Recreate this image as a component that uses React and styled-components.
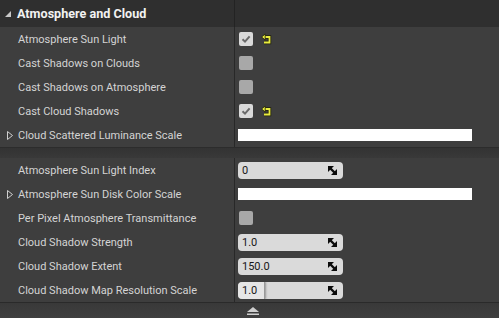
import React from "react";
import styled, { createGlobalStyle } from "styled-components";

const Global = createGlobalStyle`
  html, body { margin: 0; padding: 0; background: #3d3d3d; overflow: hidden; }
  * { box-sizing: border-box; }
`;

const Panel = styled.div`
  width: 499px;
  height: 318px;
  display: flex;
  flex-direction: column;
  background: #3d3d3d;
  font-family: Roboto, "Liberation Sans", sans-serif;
  font-size: 11px;
  color: #d6d6d6;
  overflow: hidden;
`;

const Header = styled.div`
  display: grid;
  grid-template-columns: 234px 1fr;
  height: 27px;
  background: #2f2f2f;
  flex: none;
`;

const HeaderLabel = styled.div`
  display: flex;
  align-items: center;
  padding-left: 5px;
  gap: 6px;
  font-weight: 700;
  font-size: 12.6px;
  color: #f2f2f2;
`;

const Section = styled.div`
  display: flex;
  flex-direction: column;
  flex: none;
  background: #3e3e3e;
`;

const SectionGap = styled.div`
  height: 11px;
  flex: none;
  border-top: 1px solid #2c2c2c;
  background: linear-gradient(#333333, #393939);
`;

const Row = styled.div`
  display: grid;
  grid-template-columns: 234px 1fr;
  height: 24px;
`;

const LabelCell = styled.div`
  display: flex;
  align-items: center;
  padding-left: 4px;
  white-space: nowrap;
  color: #d4d4d4;
`;

const Expander = styled.span`
  width: 14px;
  display: flex;
  align-items: center;
  padding-left: 3px;
`;

const ValueCell = styled.div`
  display: flex;
  align-items: center;
  gap: 8px;
  padding-left: 3px;
  border-left: 1px solid ${(p) => (p.$dark ? "#232323" : "#282828")};
`;

const Check = styled.div`
  width: 14px;
  height: 14px;
  margin-left: 1px;
  border-radius: 2px;
  background: ${(p) => (p.$on ? "#dadada" : "#a8a8a8")};
  display: flex;
  align-items: center;
  justify-content: center;
`;

const ColorBar = styled.div`
  width: 234px;
  height: 12px;
  background: #ffffff;
`;

const Spin = styled.div`
  position: relative;
  width: 105px;
  height: 17px;
  border-radius: 4px;
  background: #dadada;
  display: flex;
  align-items: center;
  overflow: hidden;
  color: #161616;
  font-size: 11px;
`;

const SpinFill = styled.div`
  align-self: stretch;
  display: flex;
  align-items: center;
  padding-left: 4px;
  min-width: ${(p) => (p.$fill ? "27px" : "0")};
  background: ${(p) => (p.$fill ? "#e6e6e6" : "transparent")};
  border-right: ${(p) => (p.$fill ? "1px solid #9a9a9a" : "none")};
  box-shadow: ${(p) => (p.$fill ? "1px 0 2px rgba(0,0,0,0.3)" : "none")};
  border-radius: 4px 0 0 4px;
`;

const SpinIcon = styled.svg`
  position: absolute;
  right: 6px;
  top: 4px;
`;

const Footer = styled.div`
  flex: 1;
  border-top: 1px solid #2a2a2a;
  background: linear-gradient(#393939, #3f3f3f);
  display: flex;
  align-items: center;
  justify-content: center;
  padding-left: 6px;
`;

const HeaderTri = () => (
  <svg width="6" height="6" viewBox="0 0 6 6">
    <polygon points="6,0 6,6 0,6" fill="#c8c8c8" />
  </svg>
);

const ExpandTri = () => (
  <svg width="6" height="9" viewBox="0 0 6 9">
    <polygon points="0.5,0.5 5.5,4.5 0.5,8.5" fill="none" stroke="#cfcfcf" strokeWidth="1" />
  </svg>
);

const CheckMark = () => (
  <svg width="10" height="10" viewBox="0 0 10 10">
    <polyline points="1.5,5.2 4,7.6 8.6,2.4" fill="none" stroke="#6a6a6a" strokeWidth="2" />
  </svg>
);

const ResetIcon = () => (
  <svg width="11" height="12" viewBox="0 0 11 12">
    <path d="M3.5 4 H8.5 V9.5 H3" fill="none" stroke="#20200a" strokeWidth="3.4" />
    <path d="M3.5 4 H8.5 V9.5 H3" fill="none" stroke="#e8ec40" strokeWidth="1.8" />
    <polygon points="0.6,4 4.2,1 4.2,7" fill="#e8ec40" stroke="#20200a" strokeWidth="0.8" />
  </svg>
);

const SpinArrow = () => (
  <SpinIcon width="9" height="9" viewBox="0 0 9 9">
    <polygon points="0,0 6,0 0,6" fill="#0c0c0c" />
    <polygon points="9,3 9,9 3,9" fill="#0c0c0c" />
    <line x1="1" y1="1" x2="8" y2="8" stroke="#0c0c0c" strokeWidth="2.4" />
  </SpinIcon>
);

const Eject = () => (
  <svg width="12" height="8" viewBox="0 0 12 8">
    <polygon points="6,0 12,5 0,5" fill="#cfcfcf" />
    <rect x="0" y="6.5" width="12" height="1.5" fill="#cfcfcf" />
  </svg>
);

const Prop = ({ label, expandable, children }) => (
  <Row>
    <LabelCell>
      <Expander>{expandable ? <ExpandTri /> : null}</Expander>
      {label}
    </LabelCell>
    <ValueCell>{children}</ValueCell>
  </Row>
);

const CheckValue = ({ on, reset }) => (
  <>
    <Check $on={on}>{on ? <CheckMark /> : null}</Check>
    {reset ? <ResetIcon /> : null}
  </>
);

const SpinValue = ({ value, fill }) => (
  <Spin>
    <SpinFill $fill={fill}>{value}</SpinFill>
    <SpinArrow />
  </Spin>
);

export default function App() {
  return (
    <Panel>
      <Global />
      <Header>
        <HeaderLabel>
          <HeaderTri />
          Atmosphere and Cloud
        </HeaderLabel>
        <ValueCell $dark />
      </Header>
      <Section>
        <Prop label="Atmosphere Sun Light"><CheckValue on reset /></Prop>
        <Prop label="Cast Shadows on Clouds"><CheckValue /></Prop>
        <Prop label="Cast Shadows on Atmosphere"><CheckValue /></Prop>
        <Prop label="Cast Cloud Shadows"><CheckValue on reset /></Prop>
        <Prop label="Cloud Scattered Luminance Scale" expandable><ColorBar /></Prop>
      </Section>
      <SectionGap />
      <Section>
        <Prop label="Atmosphere Sun Light Index"><SpinValue value="0" /></Prop>
        <Prop label="Atmosphere Sun Disk Color Scale" expandable><ColorBar /></Prop>
        <Prop label="Per Pixel Atmosphere Transmittance"><CheckValue /></Prop>
        <Prop label="Cloud Shadow Strength"><SpinValue value="1.0" /></Prop>
        <Prop label="Cloud Shadow Extent"><SpinValue value="150.0" /></Prop>
        <Prop label="Cloud Shadow Map Resolution Scale"><SpinValue value="1.0" fill /></Prop>
      </Section>
      <Footer><Eject /></Footer>
    </Panel>
  );
}
